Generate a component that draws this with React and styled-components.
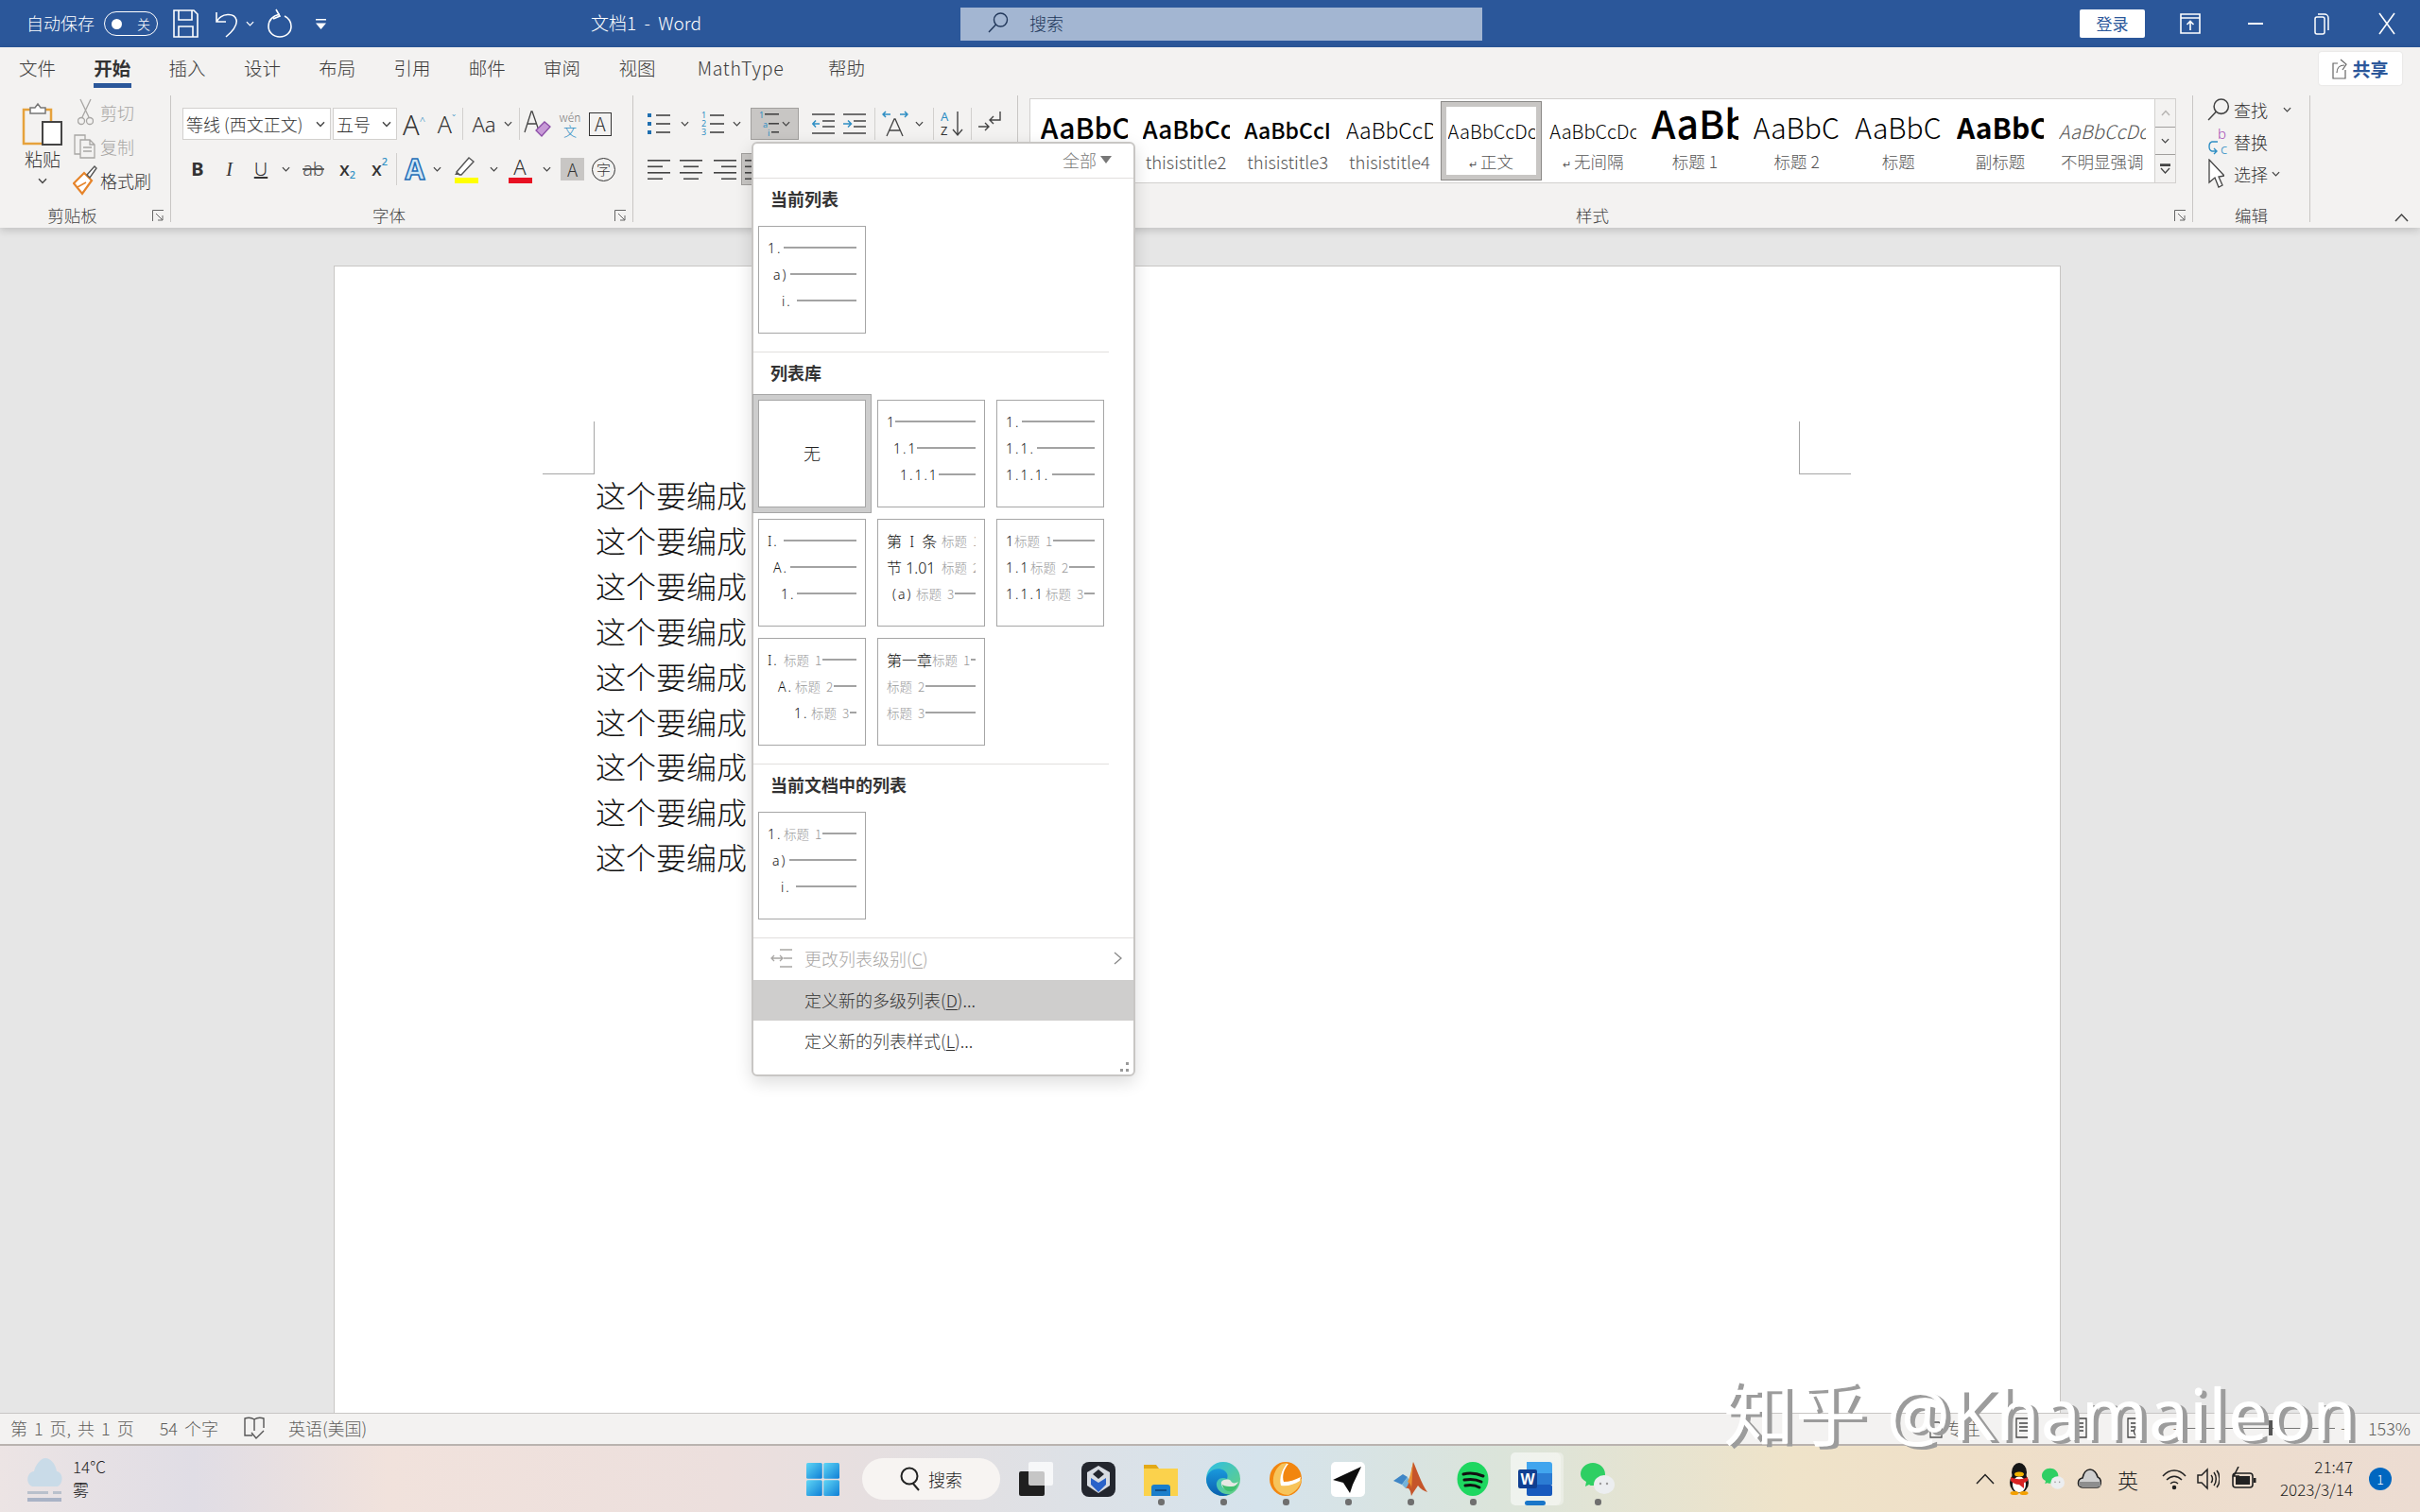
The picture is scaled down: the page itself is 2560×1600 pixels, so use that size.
import React from 'react';
import styled, { createGlobalStyle } from 'styled-components';

const ui = `"Noto Sans CJK SC", "Noto Sans", sans-serif`;

const GlobalStyle = createGlobalStyle`
  html, body { margin: 0; padding: 0; width: 2560px; height: 1600px; overflow: hidden; background: #e6e6e6; }
  body { font-family: ${ui}; color: #333; }
  * { box-sizing: border-box; }
  svg { display: block; flex: none; }
`;

const Screen = styled.div`
  position: relative;
  width: 2560px;
  height: 1600px;
  display: flex;
  flex-direction: column;
  overflow: hidden;
`;

/* ---------- title bar ---------- */
const TitleBar = styled.header`
  height: 50px;
  flex: none;
  display: grid;
  grid-template-columns: 1016px 552px 1fr;
  background: #2b579a;
  color: #fff;
`;
const QuickBar = styled.div`
  display: flex;
  align-items: center;
  padding-left: 28px;
`;
const AutoSave = styled.span`
  font-size: 18px;
  font-weight: 300;
  width: 82px;
  padding-bottom: 2px;
`;
const Toggle = styled.div`
  width: 57px;
  height: 26px;
  border: 1.5px solid #fff;
  border-radius: 13px;
  display: flex;
  align-items: center;
  justify-content: space-between;
  padding: 0 7px;
  font-size: 14px;
  font-weight: 300;
  i { width: 11px; height: 11px; border-radius: 50%; background: #fff; }
`;
const QuickIcon = styled.span`
  display: inline-flex;
  margin-left: ${p => p.$ml}px;
`;
const DocTitle = styled.span`
  margin-left: 280px;
  font-size: 19px;
  font-weight: 300;
  white-space: pre;
  padding-bottom: 3px;
`;
const SearchBox = styled.div`
  align-self: center;
  height: 35px;
  background: #a3b6d2;
  display: flex;
  align-items: center;
  padding: 0 0 2px 29px;
  gap: 22px;
  font-size: 18px;
  font-weight: 300;
  color: #21375a;
`;
const WindowControls = styled.div`
  display: flex;
  align-items: center;
  justify-content: flex-end;
`;
const LoginButton = styled.div`
  width: 69px;
  height: 30px;
  margin-right: 13px;
  background: #fff;
  color: #2b579a;
  border-radius: 2px;
  font-size: 17px;
  text-align: center;
  line-height: 30px;
`;
const WindowButton = styled.div`
  width: 69.5px;
  height: 50px;
  display: flex;
  align-items: center;
  justify-content: center;
`;

/* ---------- ribbon ---------- */
const Ribbon = styled.section`
  flex: none;
  height: 191px;
  background: #f3f2f1;
  box-shadow: 0 3px 8px rgba(0, 0, 0, 0.16);
  position: relative;
  z-index: 2;
`;
const TabRow = styled.nav`
  height: 42px;
  display: flex;
  align-items: flex-start;
  padding-left: 20px;
  gap: 39.3px;
`;
const Tab = styled.div`
  height: 43px;
  width: ${p => p.$w || 40}px;
  margin-left: ${p => p.$ml || 0}px;
  padding-top: 7px;
  border-bottom: 5px solid ${p => (p.$active ? '#2b579a' : 'transparent')};
  font-size: 19.5px;
  line-height: 30px;
  letter-spacing: ${p => (p.$w ? 0.7 : 0)}px;
  font-weight: ${p => (p.$active ? 700 : 300)};
  color: ${p => (p.$active ? '#333' : '#3b3a39')};
  white-space: nowrap;
`;
const ShareButton = styled.div`
  margin: 5px 19px 0 auto;
  width: 88px;
  height: 35px;
  background: #fff;
  border-radius: 3px;
  box-shadow: 0 0 2px rgba(0, 0, 0, 0.12);
  display: flex;
  align-items: center;
  justify-content: center;
  gap: 5px;
  font-size: 19px;
  font-weight: 700;
  color: #2b579a;
`;
const RibbonBody = styled.div`
  height: 149px;
  display: flex;
  padding: 9px 0 6px;
`;
const Group = styled.div`
  width: ${p => p.$w}px;
  height: 134px;
  flex: none;
  border-right: ${p => (p.$last ? 0 : 1)}px solid #c8c6c4;
  display: flex;
  flex-direction: column;
`;
const GroupBody = styled.div`
  height: 117px;
  flex: none;
  padding: ${p => p.$pad || '0'};
`;
const GroupLabel = styled.div`
  display: grid;
  grid-template-columns: ${p => (p.$plain ? '1fr' : '1fr 14px')};
  column-gap: 8px;
  padding-right: ${p => (p.$plain ? 0 : 5)}px;
  align-items: center;
  height: 20px;
  font-size: 17.5px;
  line-height: 20px;
  font-weight: 300;
  color: #444;
  text-align: center;
`;
const CollapseBox = styled.div`
  margin-left: auto;
  margin-right: 12px;
  align-self: flex-end;
`;

/* clipboard */
const ClipboardBody = styled(GroupBody)`
  display: flex;
  padding-left: 22px;
`;
const PasteColumn = styled.div`
  width: 46px;
  padding-top: 7px;
  display: flex;
  flex-direction: column;
  align-items: center;
  font-size: 19px;
  font-weight: 300;
  color: #333;
  span { margin: 0 0 6px; line-height: 28px; }
`;
const ClipColumn = styled.div`
  margin-left: 10px;
  display: flex;
  flex-direction: column;
`;
const ClipRow = styled.div`
  height: 36px;
  display: flex;
  align-items: center;
  padding-bottom: 1px;
  font-size: 18px;
  font-weight: 300;
  color: ${p => (p.$off ? '#a8a6a4' : '#333')};
`;
const ClipIcon = styled.span`
  width: 28px;
  display: flex;
  justify-content: center;
  padding-right: 4px;
`;

/* tool rows */
const ToolRow = styled.div`
  height: 34px;
  display: flex;
  align-items: center;
  margin-bottom: 14px;
`;
const ComboBox = styled.div`
  width: ${p => p.$w}px;
  height: 34px;
  margin-right: ${p => p.$mr || 0}px;
  background: #fff;
  border: 1px solid #d2d0ce;
  display: flex;
  align-items: center;
  justify-content: space-between;
  padding: 0 5px 0 3px;
  font-size: 18px;
  font-weight: 300;
  color: #333;
  white-space: nowrap;
  overflow: hidden;
`;
const Slot = styled.div`
  width: ${p => p.$w}px;
  height: 34px;
  margin-left: ${p => p.$ml || 0}px;
  flex: none;
  display: flex;
  align-items: center;
  justify-content: center;
  position: relative;
  background: ${p => (p.$on ? '#c8c6c4' : 'transparent')};
  border: ${p => (p.$on ? '1px solid #a19f9d' : '0')};
`;
const ToolSep = styled.div`
  width: 1px;
  height: 34px;
  flex: none;
  background: #d2d0ce;
  margin-left: ${p => p.$ml || 0}px;
`;
const Glyph = styled.span`
  font-family: ${p => p.$font || `"Noto Sans", sans-serif`};
  font-size: ${p => p.$size}px;
  font-weight: ${p => p.$weight || 300};
  font-style: ${p => (p.$italic ? 'italic' : 'normal')};
  text-decoration: ${p => p.$deco || 'none'};
  color: ${p => p.$color || '#333'};
  -webkit-text-stroke: ${p => p.$stroke || '0'};
  line-height: 1;
  white-space: nowrap;
`;
const Corner = styled.sup`
  font-size: 11px;
  line-height: 0;
  vertical-align: 11px;
  color: ${p => p.$color || '#333'};
`;
const Sub = styled.sub`
  font-size: 11px;
  line-height: 0;
  vertical-align: -3px;
  color: #2f8fc4;
`;
const BoxedA = styled.div`
  width: 24px;
  height: 25px;
  border: 1.5px solid #333;
  font-size: 20px;
  font-weight: 300;
  line-height: 22px;
  text-align: center;
`;
const GrayA = styled.div`
  width: 25px;
  height: 24px;
  background: #c8c6c4;
  font-size: 19px;
  font-weight: 300;
  line-height: 24px;
  text-align: center;
  color: #333;
`;
const CircleChar = styled.div`
  width: 25px;
  height: 25px;
  border: 1.5px solid #333;
  border-radius: 50%;
  font-size: 15px;
  line-height: 22px;
  text-align: center;
  font-weight: 300;
`;
const WenStack = styled.div`
  display: flex;
  flex-direction: column;
  align-items: center;
  font-size: 12px;
  line-height: 14px;
  color: #777;
  font-weight: 300;
  b { font-weight: 300; font-size: 14px; color: #2f8fc4; }
`;
const ColorBar = styled.div`
  display: flex;
  flex-direction: column;
  align-items: center;
  gap: 1px;
  i { width: 25px; height: 6px; background: ${p => p.$color}; }
`;

/* styles gallery */
const StylesBody = styled(GroupBody)`
  padding: 3px 0 0 12px;
`;
const StyleGallery = styled.div`
  width: 1213px;
  height: 90px;
  background: #fff;
  border: 1px solid #d2d0ce;
  padding-left: 3px;
  display: flex;
`;
const StyleItem = styled.div`
  width: 107.7px;
  height: 84px;
  margin-top: 2px;
  flex: none;
  padding: ${p => (p.$selected ? '3px 0 0' : '4px 0 0')};
  border: ${p => (p.$selected ? '1px solid #8a8886' : '0')};
  outline: ${p => (p.$selected ? '5px solid #c8c6c4' : '0')};
  outline-offset: -6px;
`;
const StylePreview = styled.div`
  width: 92px;
  height: 46px;
  margin: 0 auto;
  overflow: hidden;
  white-space: nowrap;
  font-size: 30px;
  line-height: 46px;
`;
const PreviewText = styled.span`
  font-size: ${p => p.$size}px;
  font-weight: ${p => p.$weight || 300};
  font-style: ${p => (p.$italic ? 'italic' : 'normal')};
  color: ${p => p.$color || '#000'};
  line-height: 0;
`;
const StyleName = styled.div`
  height: 30px;
  font-size: ${p => (p.$latin ? 18.5 : 17.5)}px;
  line-height: 28px;
  font-weight: 300;
  text-align: center;
  color: #555;
  white-space: nowrap;
  small { font-size: 11px; margin-right: 3px; }
`;
const GalleryScroll = styled.div`
  margin-left: auto;
  width: 22px;
  display: flex;
  flex-direction: column;
  background: #f3f2f1;
  border-left: 1px solid #d2d0ce;
`;
const ScrollButton = styled.div`
  flex: 1;
  display: flex;
  align-items: center;
  justify-content: center;
  & + & { border-top: 1px solid #a19f9d; }
`;

/* edit group */
const EditBody = styled(GroupBody)`
  padding-left: 15px;
  display: flex;
  flex-direction: column;
  gap: 4px;
`;
const EditRow = styled.div`
  height: 30px;
  display: flex;
  align-items: center;
  font-size: 18px;
  font-weight: 300;
  color: #333;
  line-height: 26px;
  span { width: 28px; flex: none; }
  em { margin-left: ${p => p.$chevron}px; font-style: normal; }
`;

/* ---------- document ---------- */
const DocArea = styled.main`
  flex: 1;
  min-height: 0;
  background: #e6e6e6;
  padding: 40px 380px 0 353px;
`;
const Page = styled.article`
  height: 100%;
  background: #fff;
  border: 1px solid #c8c6c4;
  border-bottom: 0;
  padding: 164px 221px 0 220px;
`;
const MarkRow = styled.div`
  display: flex;
  justify-content: space-between;
  margin-bottom: -2px;
`;
const CropMark = styled.div`
  width: 55px;
  height: 56px;
  border-bottom: 1px solid #a6a6a6;
  border-${p => (p.$right ? 'left' : 'right')}: 1px solid #a6a6a6;
`;
const Paragraph = styled.p`
  margin: 0 0 0 56px;
  font-size: 32px;
  line-height: 47.9px;
  font-weight: 300;
  color: #111;
`;

/* ---------- list popup ---------- */
const ListPopup = styled.div`
  position: absolute;
  left: 795px;
  top: 150px;
  width: 406px;
  height: 989px;
  z-index: 5;
  background: #fff;
  border: 2px solid #c8c6c4;
  border-radius: 6px;
  box-shadow: 0 6px 18px rgba(0, 0, 0, 0.14);
  display: flex;
  flex-direction: column;
`;
const PopupHead = styled.div`
  height: 37px;
  flex: none;
  border-bottom: 1px solid #e1dfdd;
  display: flex;
  align-items: center;
  justify-content: flex-end;
  gap: 4px;
  padding: 0 23px 3px 0;
  font-size: 18px;
  font-weight: 300;
  color: #777;
`;
const SectionTitle = styled.h3`
  margin: 0 0 6px;
  height: 44px;
  line-height: 42px;
  padding-left: 18px;
  font-size: 18px;
  font-weight: 700;
  color: #333;
`;
const ThumbGrid = styled.div`
  display: grid;
  grid-template-columns: repeat(3, 114px);
  grid-auto-rows: 114px;
  gap: 12px;
  padding-left: 5px;
`;
const Thumb = styled.div`
  width: 114px;
  height: 114px;
  background: #fff;
  border: 1px solid #a6a6a6;
  padding: 8px 9px 0;
  box-shadow: ${p => (p.$selected ? '0 0 0 5px #cdcdcd, 0 0 0 6px #a6a6a6' : 'none')};
`;
const NoneThumb = styled(Thumb)`
  display: flex;
  align-items: center;
  justify-content: center;
  padding: 0 0 2px;
  font-size: 18px;
  font-weight: 300;
  color: #222;
`;
const ThumbRow = styled.div`
  height: 28px;
  display: flex;
  align-items: center;
  overflow: hidden;
  padding-left: ${p => p.$indent || 0}px;
  white-space: nowrap;
  font-size: 14px;
  font-weight: 300;
`;
const ThumbNum = styled.span`
  flex: none;
  width: ${p => p.$w}px;
  font-family: "Noto Sans", ${ui};
  font-size: ${p => (p.$big ? 16 : 14)}px;
  letter-spacing: ${p => (p.$tight ? 0 : 2)}px;
  color: #111;
`;
const ThumbCaption = styled.span`
  flex: none;
  color: #999;
  margin-right: 1px;
  font-size: 13.5px;
  font-weight: 300;
  word-spacing: 3px;
`;
const ThumbLine = styled.i`
  flex: 1;
  min-width: 6px;
  height: 2px;
  background: #a3a3a3;
`;
const SectionRule = styled.div`
  height: 1px;
  flex: none;
  margin: 19px ${p => (p.$full ? 0 : 26)}px 0 0;
  background: #e1dfdd;
`;
const MenuItem = styled.div`
  height: ${p => p.$h}px;
  flex: none;
  display: flex;
  align-items: center;
  padding-bottom: 2px;
  font-size: 18px;
  font-weight: 300;
  color: ${p => (p.$off ? '#a8a6a4' : '#333')};
  background: ${p => (p.$on ? '#cfcecd' : 'transparent')};
  u { text-underline-offset: 2px; }
`;
const MenuIcon = styled.span`
  width: 54px;
  flex: none;
  display: flex;
  justify-content: center;
  padding-left: 8px;
`;
const MenuArrow = styled.span`
  margin-left: auto;
  margin-right: 12px;
`;
const Grip = styled.div`
  flex: 1;
  display: flex;
  align-items: flex-end;
  justify-content: flex-end;
  padding: 0 5px 3px 0;
`;

/* ---------- status bar ---------- */
const StatusBar = styled.footer`
  height: 35px;
  flex: none;
  background: #f3f2f1;
  border-top: 1px solid #c8c6c4;
  border-bottom: 2px solid #b9b3af;
  display: flex;
  align-items: center;
  padding: 0 10px 2px 11px;
  font-size: 18px;
  font-weight: 300;
  color: #605e5c;
`;
const StatusText = styled.span`
  margin-left: ${p => p.$ml || 0}px;
  white-space: pre;
  word-spacing: 3px;
`;
const StatusIcon = styled.span`
  margin-left: ${p => (p.$auto ? 'auto' : `${p.$ml}px`)};
  display: inline-flex;
`;
const ZoomSlider = styled.div`
  width: 160px;
  height: 1px;
  margin-left: 2px;
  background: #777;
  display: flex;
  align-items: center;
  padding-left: 90px;
  i { width: 4px; height: 16px; background: #555; }
`;
const Watermark = styled.div`
  position: absolute;
  left: 1823px;
  top: 1445px;
  z-index: 6;
  font-family: "Noto Sans", "Noto Sans CJK SC", sans-serif;
  font-size: 75px;
  line-height: 100px;
  letter-spacing: 1px;
  color: #fff;
  text-shadow: 5px 3px 0 #9c9c9c;
  white-space: pre;
`;

/* ---------- taskbar ---------- */
const Taskbar = styled.div`
  height: 70px;
  flex: none;
  background: linear-gradient(90deg, #ece4e4 0%, #e0dde5 8%, #f1e2dc 16%, #ecdfdd 30%, #e6dfe0 36%, #d5e3ec 52%, #dbe4da 62%, #efe3c9 74%, #efdfc8 82%, #ecdcd2 100%);
  display: grid;
  grid-template-columns: 853px auto 1fr;
`;
const Weather = styled.div`
  display: flex;
  align-items: center;
  padding: 0 0 2px 28px;
  gap: 11px;
  font-size: 17px;
  font-weight: 300;
  line-height: 24px;
  color: #222;
`;
const TaskCenter = styled.div`
  display: flex;
  align-items: center;
`;
const StartIcon = styled.div`
  width: 59px;
`;
const SearchPill = styled.div`
  width: 146px;
  height: 44px;
  margin-right: 5px;
  border-radius: 22px;
  background: #f7f4f2;
  display: flex;
  align-items: center;
  justify-content: center;
  gap: 8px;
  font-size: 18px;
  font-weight: 300;
  color: #222;
`;
const TaskApp = styled.div`
  position: relative;
  width: 66px;
  height: 70px;
  display: flex;
  align-items: center;
  justify-content: center;
`;
const ActiveWash = styled.div`
  width: 53px;
  height: 56px;
  border-radius: 5px;
  background: rgba(255, 255, 255, 0.55);
  box-shadow: 3px 0 0 rgba(255, 255, 255, 0.35);
  display: flex;
  align-items: center;
  justify-content: center;
`;
const RunDot = styled.i`
  position: absolute;
  bottom: 7px;
  left: 50%;
  width: ${p => (p.$active ? 22 : 7)}px;
  height: ${p => (p.$active ? 5 : 7)}px;
  margin-left: ${p => (p.$active ? -11 : -3.5)}px;
  border-radius: 3px;
  background: ${p => (p.$active ? '#1976c9' : '#6f6f6f')};
`;
const Tray = styled.div`
  display: flex;
  align-items: center;
  justify-content: flex-end;
  padding-right: 30px;
  font-weight: 300;
  color: #222;
`;
const TrayItem = styled.span`
  display: inline-flex;
  margin-left: ${p => p.$ml}px;
  font-size: 22px;
`;
const Clock = styled.div`
  margin-left: 25px;
  padding-bottom: 2px;
  text-align: right;
  font-size: 17px;
  line-height: 24px;
  font-weight: 300;
`;
const Badge = styled.div`
  width: 24px;
  height: 24px;
  margin-left: 17px;
  border-radius: 50%;
  background: #0067c0;
  color: #fff;
  font-size: 14px;
  line-height: 24px;
  text-align: center;
`;

/* ---------- icons ---------- */
const Chev = ({ c = '#444', s = 10 }) => (
  <svg width={s} height={s * 0.7} viewBox="0 0 10 7"><path d="M1 1.2 5 5.4 9 1.2" fill="none" stroke={c} strokeWidth="1.4" /></svg>
);
const Launcher = () => (
  <svg width="13" height="13" viewBox="0 0 13 13" fill="none" stroke="#666" strokeWidth="1"><path d="M.5 12V.5H12M4 4l7 7M11 6v5H6" /></svg>
);
const SaveIcon = () => (
  <svg width="27" height="30" viewBox="0 0 27 30" fill="none" stroke="#fff" strokeWidth="1.6"><path d="M1 1h21l4 4v24H1zM6 1v10h14V1M6 29V18h15v11" /></svg>
);
const UndoIcon = () => (
  <svg width="24" height="30" viewBox="0 0 24 30" fill="none" stroke="#fff" strokeWidth="1.6"><path d="M1 3v10h10M1.5 12.5C6 4 20 3 22 11c1.600 6.500-5 13-11 18" /></svg>
);
const RedoIcon = () => (
  <svg width="26" height="32" viewBox="0 0 26 32" fill="none" stroke="#fff" strokeWidth="1.6"><path d="M9 1l4 7-7 3M13 6C5 8 1 13 1 19c0 6 5 11 12 11s12-5 12-11c0-5-3-9-7-11" /></svg>
);
const CustomizeIcon = () => (
  <svg width="11" height="11" viewBox="0 0 11 11" fill="#fff"><path d="M0 0h11v1.500H0zM0 4.500h11L5.500 11z" /></svg>
);
const SearchGlass = ({ c = '#21375a', s = 22 }) => (
  <svg width={s} height={s} viewBox="0 0 22 22" fill="none" stroke={c} strokeWidth="1.4"><circle cx="13.500" cy="8" r="7" /><path d="M8.500 13 1 21" /></svg>
);
const DisplayIcon = () => (
  <svg width="22" height="22" viewBox="0 0 22 22" fill="none" stroke="#fff" strokeWidth="1.6"><path d="M1 1h20v20H1zM1 5h20M11 18v-9M7.500 12 11 8.500l3.500 3.500" /></svg>
);
const MinIcon = () => (
  <svg width="16" height="3" viewBox="0 0 16 3"><path d="M0 0h16v2H0z" fill="#fff" /></svg>
);
const RestoreIcon = () => (
  <svg width="16" height="24" viewBox="0 0 16 24" fill="none" stroke="#fff" strokeWidth="1.5"><rect x="1" y="5" width="10" height="18" rx="2" /><path d="M4 2h7a4 4 0 0 1 4 4v13" /></svg>
);
const CloseIcon = () => (
  <svg width="18" height="24" viewBox="0 0 18 24" stroke="#fff" strokeWidth="1.6"><path d="M1 1l16 22M17 1 1 23" /></svg>
);
const ShareIcon = () => (
  <svg width="16" height="22" viewBox="0 0 16 22" fill="none" stroke="#666" strokeWidth="1.2"><path d="M6 5H1v16h13V12M5 15c0-5 3-8 8-8M9 1l6 5-4 6" /></svg>
);
const PasteIcon = () => (
  <svg width="44" height="46" viewBox="0 0 44 46" fill="none">
    <path d="M9 8H2v36h20" stroke="#e6a23c" strokeWidth="2.500" />
    <path d="M24 8h7v12" stroke="#e6a23c" strokeWidth="2.500" />
    <path d="M9 12V6h5l3-4 3 4h5v6z" fill="#fff" stroke="#777" strokeWidth="1.500" />
    <rect x="22" y="21" width="20" height="24" fill="#fff" stroke="#444" strokeWidth="2" />
  </svg>
);
const ScissorsIcon = () => (
  <svg width="17" height="30" viewBox="0 0 17 30" fill="none" stroke="#a8a6a4" strokeWidth="1.300"><path d="M3 1l9 19M14 1 5 20" /><circle cx="4" cy="24" r="3.500" /><circle cx="13" cy="24" r="3.500" /></svg>
);
const CopyIcon = () => (
  <svg width="24" height="26" viewBox="0 0 24 26" fill="none" stroke="#a8a6a4" strokeWidth="1.300"><path d="M7 21H1V1h11v5" /><path d="M7 6h10l5 5v14H7zM10 14h9M10 18h9M17 6v5h5" /></svg>
);
const BrushIcon = () => (
  <svg width="26" height="34" viewBox="0 0 26 34"><path d="M1 20 12 9l8 8L10 31z" fill="#fff" stroke="#e6842a" strokeWidth="2.200" /><path d="M5 24l9-5" stroke="#e6842a" strokeWidth="1.500" /><path d="M15 11 23 2l2 2-7 10z" fill="#fff" stroke="#555" strokeWidth="1.400" /></svg>
);
const EraserIcon = () => (
  <svg width="30" height="30" viewBox="0 0 30 30"><path d="M1 24 8 2h1l7 20M4 15h9" fill="none" stroke="#444" strokeWidth="1.300" /><path d="M13 22l9-9 6 5-9 10z" fill="#c79ad7" stroke="#8c4ea8" strokeWidth="1.300" /></svg>
);
const ListLines = ({ rows, markColor = '#2f8fc4', tall = 26 }) => (
  <svg width="24" height={tall} viewBox="0 0 24 26">
    {[4, 13, 22].map((y, i) => (
      <g key={y}>
        {rows === 'dots' && <rect x="0" y={y - 2} width="4" height="4" fill="#1f6fb0" />}
        {rows === 'nums' && <text x="0" y={y + 3} fontSize="9" fill={markColor} fontFamily="Noto Sans">{i + 1}</text>}
        <rect x="9" y={y - 0.800} width="15" height="1.600" fill="#444" />
      </g>
    ))}
  </svg>
);
const MultiIcon = () => (
  <svg width="24" height="28" viewBox="0 0 24 28">
    <text x="0" y="8" fontSize="9" fill="#2f8fc4" fontFamily="Noto Sans">1</text>
    <rect x="6" y="3" width="15" height="1.600" fill="#444" />
    <text x="4" y="18" fontSize="9" fill="#2f8fc4" fontFamily="Noto Sans">a</text>
    <rect x="10" y="13" width="11" height="1.600" fill="#444" />
    <text x="9" y="27" fontSize="9" fill="#2f8fc4" fontFamily="Noto Sans">i</text>
    <rect x="13" y="22" width="8" height="1.600" fill="#444" />
  </svg>
);
const IndentIcon = ({ out }) => (
  <svg width="24" height="24" viewBox="0 0 24 24" fill="none">
    <path d="M0 2h24M11 9h13M11 15h13M0 22h24" stroke="#444" strokeWidth="1.500" />
    <path d={out ? 'M8 12H1M4 8.500 .8 12 4 15.500' : 'M0 12h8M5 8.500 8.500 12 5 15.500'} stroke="#2f8fc4" strokeWidth="1.500" />
  </svg>
);
const AlignIcon = ({ kind }) => {
  const rows = { left: [[0, 24], [0, 16], [0, 24], [0, 16]], center: [[0, 24], [4, 20], [0, 24], [4, 20]], right: [[0, 24], [8, 24], [0, 24], [8, 24]], just: [[0, 24], [0, 24], [0, 24], [0, 24]] }[kind];
  return (
    <svg width="24" height="22" viewBox="0 0 24 22">
      {rows.map(([a, b], i) => <rect key={i} x={a} y={1 + i * 6.500} width={b - a} height="1.600" fill="#444" />)}
    </svg>
  );
};
const SpacingA = () => (
  <svg width="28" height="30" viewBox="0 0 28 30" fill="none">
    <path d="M5 28 13 10h1l8 18M8 22h11" stroke="#444" strokeWidth="1.300" />
    <path d="M1 5h8M4 2 1 5l3 3M27 5h-8M24 2l3 3-3 3" stroke="#2f8fc4" strokeWidth="1.500" />
  </svg>
);
const SortIcon = () => (
  <svg width="26" height="30" viewBox="0 0 26 30">
    <text x="0" y="12" fontSize="13" fill="#2f8fc4" fontFamily="Noto Sans">A</text>
    <text x="0" y="27" fontSize="13" fill="#333" fontFamily="Noto Sans">Z</text>
    <path d="M18 2v25M13 21l5 6 5-6" fill="none" stroke="#444" strokeWidth="1.400" />
  </svg>
);
const PilcrowIcon = () => (
  <svg width="26" height="28" viewBox="0 0 26 28" fill="none" stroke="#444" strokeWidth="1.400"><path d="M1 17h11M8 13l4 4-4 4" /><path d="M24 1v9H13M17 6l-4 4 4 4" /></svg>
);
const HighlightIcon = () => (
  <svg width="25" height="22" viewBox="0 0 25 22"><path d="M5 20 2 17 15 2l5 4L7 20z" fill="#fff" stroke="#555" strokeWidth="1.400" /><path d="M2 17l5 3H0z" fill="#555" /></svg>
);
const ReplaceIcon = () => (
  <svg width="24" height="30" viewBox="0 0 24 30">
    <text x="11" y="12" fontSize="15" fill="#a54fb5" fontFamily="Noto Sans">b</text>
    <text x="14" y="28" fontSize="15" fill="#2f8fc4" fontFamily="Noto Sans">c</text>
    <path d="M11 15H5c-4 1-4 9 0 10h5M7 22l3 3-3 3" fill="none" stroke="#2f8fc4" strokeWidth="1.400" />
  </svg>
);
const CursorIcon = () => (
  <svg width="18" height="32" viewBox="0 0 18 32" fill="#fff" stroke="#444" strokeWidth="1.300"><path d="M2 1v24l6-5 4 10 4-2-4-9 6-1z" /></svg>
);
const ChangeLevelIcon = () => (
  <svg width="26" height="20" viewBox="0 0 26 20" fill="none" stroke="#a8a6a4" strokeWidth="1.300"><path d="M10 1h13M14 10h9M10 19h13M1 10h12M4 7l-3 3 3 3M10 7l3 3-3 3" /></svg>
);
const BookIcon = () => (
  <svg width="26" height="26" viewBox="0 0 26 26" fill="none" stroke="#555" strokeWidth="1.400"><path d="M13 4C10 2 6 2 3 3v18h8M13 4c3-2 7-2 10-1v10M13 4v12M10 18l5 6 8-8" /></svg>
);
const FocusIcon = () => (
  <svg width="18" height="24" viewBox="0 0 18 24" fill="none" stroke="#555" strokeWidth="1.300"><path d="M3 6h9l3 3v13H3z" /></svg>
);
const ViewIcon = ({ web }) => (
  <svg width="20" height="24" viewBox="0 0 20 24" fill="none" stroke="#444" strokeWidth="1.300"><path d="M2 2h16v20H2zM5 7h10M5 11h10M5 15h10" />{web && <circle cx="14" cy="16" r="5.500" fill="#fff" />}</svg>
);
const WindowsLogo = () => (
  <svg width="35" height="35" viewBox="0 0 35 35">
    <defs><linearGradient id="winb" x1="0" y1="0" x2="1" y2="1"><stop offset="0" stopColor="#5fd6f5" /><stop offset="1" stopColor="#0f7fd6" /></linearGradient></defs>
    <rect x="0" y="0" width="16.800" height="16.800" rx="1.500" fill="url(#winb)" />
    <rect x="18.200" y="0" width="16.800" height="16.800" rx="1.500" fill="url(#winb)" />
    <rect x="0" y="18.200" width="16.800" height="16.800" rx="1.500" fill="url(#winb)" />
    <rect x="18.200" y="18.200" width="16.800" height="16.800" rx="1.500" fill="url(#winb)" />
  </svg>
);
const TaskView = () => (
  <svg width="38" height="36" viewBox="0 0 38 36">
    <rect x="1" y="10" width="27" height="26" rx="2" fill="#1f1f1f" />
    <rect x="11" y="0" width="26" height="25" rx="2" fill="#fff" fillOpacity="0.75" />
  </svg>
);
const CubeApp = () => (
  <svg width="36" height="37" viewBox="0 0 36 37">
    <rect width="36" height="37" rx="8" fill="#23262e" />
    <path d="M18 4 30 11v14l-12 8L6 25V11z" fill="#d7dbe2" />
    <path d="M18 8l6 5-6 5-6-5z" fill="#23262e" />
    <path d="M10 17l8 5 8-5v7l-8 8-8-8z" fill="#2a62c9" />
  </svg>
);
const FolderApp = () => (
  <svg width="36" height="35" viewBox="0 0 36 35">
    <path d="M0 2h13l3 4h20v29H0z" fill="#e3a917" />
    <rect y="6" width="36" height="29" fill="#fbd24c" />
    <path d="M8 26a3 3 0 0 1 3-3h14a3 3 0 0 1 3 3v9H8z" fill="#1a7ecb" />
    <rect x="12" y="28" width="12" height="2" fill="#0f4f8a" />
  </svg>
);
const EdgeApp = () => (
  <svg width="36" height="36" viewBox="0 0 36 36">
    <defs>
      <linearGradient id="edgea" x1="0" y1="0" x2="1" y2="1"><stop offset="0" stopColor="#2bbde8" /><stop offset="1" stopColor="#6ad27a" /></linearGradient>
      <linearGradient id="edgeb" x1="0" y1="0" x2="0" y2="1"><stop offset="0" stopColor="#1a9adc" /><stop offset="1" stopColor="#0b5fb0" /></linearGradient>
    </defs>
    <circle cx="18" cy="18" r="18" fill="url(#edgea)" />
    <path d="M0 18C2 8 12 5 19 9c4 3 4 6 3 9-6-3-12 1-11 7 1 6 7 10 14 9-2 1-5 2-7 2C8 36 0 28 0 18z" fill="url(#edgeb)" />
    <path d="M16 21c3-3 8-3 10-1 1 3 5 3 8 1-1 4-4 7-8 9-6 1-11-4-10-9z" fill="#e6e8e4" />
    <path d="M17 24c1 5 5 8 10 7 3-1 6-4 7-10-1 3-4 5-7 5-4 0-7 0-10-2z" fill="#3fbf70" />
  </svg>
);
const OrangeApp = () => (
  <svg width="36" height="36" viewBox="0 0 36 36">
    <ellipse cx="18" cy="18" rx="17" ry="18" fill="#f2860f" />
    <path d="M20 1c-6 6-9 15-6 22 6 1 13-1 21-5-1 8-7 14-14 17-6 0-12-3-15-9C3 18 6 7 14 2z" fill="#f7c45a" />
    <path d="M21 2c-5 6-7 13-5 19 6 0 12-2 18-5l-1 4c-6 4-13 6-20 5-2-8 1-17 6-23z" fill="#fff" />
  </svg>
);
const PlaneApp = () => (
  <svg width="36" height="37" viewBox="0 0 36 37">
    <rect width="36" height="37" rx="5" fill="#fff" />
    <path d="M32 5 2 19l11 3 7 11 3-9zM19 22l10-13-14 12z" fill="#0d0d0d" />
  </svg>
);
const MatlabApp = () => (
  <svg width="36" height="36" viewBox="0 0 36 36">
    <path d="M0 20 10 13l5 3-6 8z" fill="#3f86c6" />
    <path d="M9 24l6-8 4 8-6 4z" fill="#74b3d9" />
    <path d="M21 0c3 6 9 24 15 32-3-1-7-3-10-7-2 3-5 7-7 11-1-6-2-9-6-8 5-5 6-20 8-28z" fill="#c5552a" />
    <path d="M21 0c-2 8-3 16-6 21 3 2 4 4 4 8 1-10 1-20 2-29z" fill="#e89033" />
  </svg>
);
const SpotifyApp = () => (
  <svg width="34" height="36" viewBox="0 0 34 36" fill="none">
    <ellipse cx="17" cy="18" rx="16.500" ry="18" fill="#1ed760" />
    <path d="M7 13c7-2 14-1 21 2M8 19c6-1 12-1 18 2M9 25c5-1 10-1 15 2" stroke="#111" strokeWidth="3" strokeLinecap="round" />
  </svg>
);
const WordApp = () => (
  <svg width="36" height="36" viewBox="0 0 36 36">
    <path d="M9 0h24a3 3 0 0 1 3 3v9H9z" fill="#41a5ee" />
    <rect x="9" y="12" width="27" height="12" fill="#2b7cd3" />
    <rect x="9" y="24" width="27" height="12" rx="2" fill="#185abd" />
    <rect x="0" y="8" width="20" height="20" rx="2" fill="#103f91" />
    <text x="10" y="24" textAnchor="middle" fontSize="16" fontWeight="700" fill="#fff" fontFamily="Liberation Sans">W</text>
  </svg>
);
const WeChatIcon = ({ s = 36 }) => (
  <svg width={s} height={s} viewBox="0 0 36 36">
    <path d="M13 1c7 0 13 5 13 12s-6 12-13 12c-2 0-3 0-4-1l-4 2 1-5C2 19 0 16 0 13 0 6 6 1 13 1z" fill="#2ecf63" />
    <ellipse cx="25" cy="24" rx="11" ry="10" fill="#eceef0" />
    <circle cx="21" cy="23" r="1.200" fill="#999" />
    <circle cx="28" cy="23" r="1.200" fill="#999" />
  </svg>
);
const WeatherIcon = () => (
  <svg width="38" height="54" viewBox="0 0 38 54">
    <path d="M8 36c-9 0-9-15 0-16 1-6 7-14 12-14s11 6 12 14c8 1 7 16-1 16z" fill="#c9dbe8" />
    <rect x="1" y="41" width="22" height="3" fill="#b9c0cc" />
    <rect x="28" y="41" width="9" height="3" fill="#b9c0cc" />
    <rect x="1" y="48" width="36" height="4" fill="#a9b3c6" />
  </svg>
);
const QQIcon = () => (
  <svg width="22" height="34" viewBox="0 0 22 34">
    <ellipse cx="11" cy="10" rx="8" ry="10" fill="#161616" />
    <ellipse cx="11" cy="21" rx="10" ry="11" fill="#161616" />
    <ellipse cx="11" cy="23" rx="7" ry="8.500" fill="#fff" />
    <ellipse cx="11" cy="12" rx="5" ry="2.500" fill="#f4b400" />
    <path d="M2 15c6 3 12 3 18 0v4c-2 1-3 2-4 2v6l-5-4c-4 0-7-2-9-4z" fill="#d92323" />
    <ellipse cx="6" cy="32" rx="4.500" ry="2" fill="#f4a000" />
    <ellipse cx="16" cy="32" rx="4.500" ry="2" fill="#f4a000" />
  </svg>
);
const CloudIcon = () => (
  <svg width="26" height="22" viewBox="0 0 26 22">
    <path d="M6 20c-6 0-6-9 0-10 1-5 4-9 8-9s7 4 8 8c5 2 4 11-1 11z" fill="#cfcfcf" stroke="#222" strokeWidth="1.600" />
    <path d="M2 14h23v5l-4 1H6l-4-2z" fill="#8e8e8e" />
  </svg>
);
const WifiIcon = () => (
  <svg width="26" height="24" viewBox="0 0 26 24" fill="none" stroke="#222" strokeWidth="1.500"><path d="M1 9c7-8 17-8 24 0M5 13c5-5 11-5 16 0M9 17c3-2.500 5-2.500 8 0" /><circle cx="13" cy="21" r="1.500" fill="#222" /></svg>
);
const VolumeIcon = () => (
  <svg width="24" height="24" viewBox="0 0 24 24" fill="none" stroke="#222" strokeWidth="1.500"><path d="M1 8h4l6-6v20l-6-6H1zM15 8c2 2 2 6 0 8M18 5c3 4 3 10 0 14M21 3c4 5 4 13 0 18" /></svg>
);
const BatteryIcon = () => (
  <svg width="26" height="26" viewBox="0 0 26 26"><rect x="1" y="7" width="21" height="15" rx="3" fill="none" stroke="#222" strokeWidth="1.600" /><rect x="23" y="12" width="2.500" height="5" fill="#222" /><rect x="4" y="10" width="15" height="9" fill="#222" /><path d="M7 0 2 10h5l-2 7" fill="none" stroke="#222" strokeWidth="1.600" /></svg>
);
const SearchGlassRound = () => (
  <svg width="22" height="26" viewBox="0 0 22 26" fill="none" stroke="#222" strokeWidth="2"><circle cx="10" cy="10" r="8.500" /><path d="M14 18l6 7" /></svg>
);

/* ---------- data ---------- */
const tabs = [
  { t: '文件' }, { t: '开始', active: true }, { t: '插入' }, { t: '设计' }, { t: '布局' },
  { t: '引用' }, { t: '邮件' }, { t: '审阅' }, { t: '视图' },
  { t: 'MathType', w: 96, ml: 4 }, { t: '帮助', ml: 3 },
];

const styleItems = [
  { text: 'AaBbC', size: 30, weight: 500, name: '' },
  { text: 'AaBbCc', size: 26, weight: 500, name: 'thisistitle2', latin: true },
  { text: 'AaBbCcI', size: 23, weight: 500, name: 'thisistitle3', latin: true },
  { text: 'AaBbCcD', size: 23, name: 'thisistitle4', latin: true },
  { text: 'AaBbCcDc', size: 20, name: '正文', mark: true, selected: true },
  { text: 'AaBbCcDc', size: 20, name: '无间隔', mark: true },
  { text: 'AaBbI', size: 41, weight: 500, name: '标题 1' },
  { text: 'AaBbC', size: 30, name: '标题 2' },
  { text: 'AaBbC', size: 30, name: '标题' },
  { text: 'AaBbC', size: 30, weight: 700, name: '副标题' },
  { text: 'AaBbCcDc', size: 20, italic: true, color: '#555', name: '不明显强调' },
];

const r = (num, w, indent, caption, big, tight) => ({ num, w, indent, caption, big, tight });
const outlineA = [r('1.', 17, 0), r('a)', 18, 6), r('i.', 16, 15)];
const galleryThumbs = [
  { none: true },
  { rows: [r('1', 9, 0), r('1.1', 25, 7), r('1.1.1', 41, 14)] },
  { rows: [r('1.', 17, 0), r('1.1.', 33, 0), r('1.1.1.', 49, 0)] },
  { rows: [r('I.', 17, 0), r('A.', 18, 6), r('1.', 17, 14)] },
  { rows: [r('第 I 条', 58, 0, '标题 1', true), r('节 1.01', 58, 0, '标题 2', true, true), r('(a)', 25, 6, '标题 3')] },
  { rows: [r('1', 9, 0, '标题 1'), r('1.1', 26, 0, '标题 2'), r('1.1.1', 42, 0, '标题 3')] },
  { rows: [r('I.', 17, 0, '标题 1'), r('A.', 18, 11, '标题 2'), r('1.', 18, 28, '标题 3')] },
  { rows: [r('第一章', 48, 0, '标题 1', true, true), r('', 0, 0, '标题 2'), r('', 0, 0, '标题 3')] },
];
const taskApps = [
  { icon: <TaskView /> },
  { icon: <CubeApp /> },
  { icon: <FolderApp />, dot: true },
  { icon: <EdgeApp />, dot: true },
  { icon: <OrangeApp />, dot: true },
  { icon: <PlaneApp />, dot: true },
  { icon: <MatlabApp />, dot: true },
  { icon: <SpotifyApp />, dot: true },
  { icon: <WordApp />, active: true },
  { icon: <WeChatIcon />, dot: true },
];

const OutlineThumb = ({ rows }) => (
  <Thumb>
    {rows.map((row, i) => (
      <ThumbRow key={i} $indent={row.indent}>
        {row.num && <ThumbNum $w={row.w} $big={row.big} $tight={row.tight}>{row.num}</ThumbNum>}
        {row.caption && <ThumbCaption>{row.caption}</ThumbCaption>}
        <ThumbLine />
      </ThumbRow>
    ))}
  </Thumb>
);

export default function App() {
  return (
    <Screen>
      <GlobalStyle />
      <TitleBar>
        <QuickBar>
          <AutoSave>自动保存</AutoSave>
          <Toggle><i />关</Toggle>
          <QuickIcon $ml={16}><SaveIcon /></QuickIcon>
          <QuickIcon $ml={18}><UndoIcon /></QuickIcon>
          <QuickIcon $ml={8}><Chev c="#fff" s={9} /></QuickIcon>
          <QuickIcon $ml={14}><RedoIcon /></QuickIcon>
          <QuickIcon $ml={25}><CustomizeIcon /></QuickIcon>
          <DocTitle>文档1  -  Word</DocTitle>
        </QuickBar>
        <SearchBox><SearchGlass />搜索</SearchBox>
        <WindowControls>
          <LoginButton>登录</LoginButton>
          <WindowButton><DisplayIcon /></WindowButton>
          <WindowButton><MinIcon /></WindowButton>
          <WindowButton><RestoreIcon /></WindowButton>
          <WindowButton><CloseIcon /></WindowButton>
        </WindowControls>
      </TitleBar>

      <Ribbon>
        <TabRow>
          {tabs.map(tab => (
            <Tab key={tab.t} $active={tab.active} $w={tab.w} $ml={tab.ml}>{tab.t}</Tab>
          ))}
          <ShareButton><ShareIcon />共享</ShareButton>
        </TabRow>
        <RibbonBody>
          <Group $w={181}>
            <ClipboardBody>
              <PasteColumn>
                <PasteIcon />
                <span>粘贴</span>
                <Chev />
              </PasteColumn>
              <ClipColumn>
                <ClipRow $off><ClipIcon><ScissorsIcon /></ClipIcon>剪切</ClipRow>
                <ClipRow $off><ClipIcon><CopyIcon /></ClipIcon>复制</ClipRow>
                <ClipRow><ClipIcon><BrushIcon /></ClipIcon>格式刷</ClipRow>
              </ClipColumn>
            </ClipboardBody>
            <GroupLabel><span>剪贴板</span><Launcher /></GroupLabel>
          </Group>

          <Group $w={489}>
            <GroupBody $pad="13px 0 0 12px">
              <ToolRow>
                <ComboBox $w={157} $mr={2}>等线 (西文正文)<Chev /></ComboBox>
                <ComboBox $w={68}>五号<Chev /></ComboBox>
                <Slot $w={36}><Glyph $size={29}>A<Corner $color="#2f8fc4">^</Corner></Glyph></Slot>
                <Slot $w={33}><Glyph $size={25}>A<Corner $color="#2f8fc4">ˇ</Corner></Glyph></Slot>
                <ToolSep />
                <Slot $w={38} $ml={3}><Glyph $size={22}>Aa</Glyph></Slot>
                <Slot $w={12}><Chev s={9} /></Slot>
                <ToolSep $ml={6} />
                <Slot $w={38}><EraserIcon /></Slot>
                <Slot $w={30}><WenStack>wén<b>文</b></WenStack></Slot>
                <Slot $w={34}><BoxedA>A</BoxedA></Slot>
              </ToolRow>
              <ToolRow>
                <Slot $w={32}><Glyph $size={20} $weight={700}>B</Glyph></Slot>
                <Slot $w={35}><Glyph $size={20} $italic $font="Liberation Serif">I</Glyph></Slot>
                <Slot $w={32}><Glyph $size={20} $deco="underline">U</Glyph></Slot>
                <Slot $w={20}><Chev s={9} /></Slot>
                <Slot $w={39}><Glyph $size={20} $deco="line-through" $color="#555">ab</Glyph></Slot>
                <Slot $w={33}><Glyph $size={20} $weight={500}>x<Sub>2</Sub></Glyph></Slot>
                <Slot $w={35}><Glyph $size={20} $weight={500}>x<Corner $color="#2f8fc4">2</Corner></Glyph></Slot>
                <ToolSep />
                <Slot $w={38}><Glyph $size={30} $weight={700} $color="#cfe6f5" $stroke="1.5px #1f6fb8">A</Glyph></Slot>
                <Slot $w={8}><Chev s={9} /></Slot>
                <Slot $w={50} $ml={2}><ColorBar $color="#ffff00"><HighlightIcon /><i /></ColorBar></Slot>
                <Slot $w={8}><Chev s={9} /></Slot>
                <Slot $w={48}><ColorBar $color="#e81123"><Glyph $size={22}>A</Glyph><i /></ColorBar></Slot>
                <Slot $w={8}><Chev s={9} /></Slot>
                <Slot $w={25} $ml={11}><GrayA>A</GrayA></Slot>
                <Slot $w={25} $ml={8}><CircleChar>字</CircleChar></Slot>
              </ToolRow>
            </GroupBody>
            <GroupLabel><span>字体</span><Launcher /></GroupLabel>
          </Group>

          <Group $w={407}>
            <GroupBody $pad="13px 0 0 12px">
              <ToolRow>
                <Slot $w={30}><ListLines rows="dots" /></Slot>
                <Slot $w={24}><Chev s={9} /></Slot>
                <Slot $w={36}><ListLines rows="nums" /></Slot>
                <Slot $w={14}><Chev s={9} /></Slot>
                <Slot $w={51} $ml={8} $on><MultiIcon /><Chev s={9} /></Slot>
                <Slot $w={26} $ml={13}><IndentIcon out /></Slot>
                <Slot $w={26} $ml={7}><IndentIcon /></Slot>
                <ToolSep $ml={8} />
                <Slot $w={42}><SpacingA /></Slot>
                <Slot $w={8}><Chev s={9} /></Slot>
                <ToolSep $ml={11} />
                <Slot $w={39}><SortIcon /></Slot>
                <ToolSep />
                <Slot $w={38}><PilcrowIcon /></Slot>
              </ToolRow>
              <ToolRow>
                <Slot $w={30}><AlignIcon kind="left" /></Slot>
                <Slot $w={30} $ml={4}><AlignIcon kind="center" /></Slot>
                <Slot $w={30} $ml={6}><AlignIcon kind="right" /></Slot>
                <Slot $w={32} $ml={2} $on><AlignIcon kind="just" /></Slot>
              </ToolRow>
            </GroupBody>
            <GroupLabel $plain />
          </Group>

          <Group $w={1243}>
            <StylesBody>
              <StyleGallery>
                {styleItems.map((item, i) => (
                  <StyleItem key={i} $selected={item.selected}>
                    <StylePreview>
                      <PreviewText $size={item.size} $weight={item.weight} $italic={item.italic} $color={item.color}>{item.text}</PreviewText>
                    </StylePreview>
                    <StyleName $latin={item.latin}>{item.mark && <small>↵</small>}{item.name}</StyleName>
                  </StyleItem>
                ))}
                <GalleryScroll>
                  <ScrollButton><svg width="10" height="7" viewBox="0 0 10 7"><path d="M1 6 5 1.600 9 6" fill="none" stroke="#b5b3b1" strokeWidth="1.400" /></svg></ScrollButton>
                  <ScrollButton><Chev s={9} /></ScrollButton>
                  <ScrollButton>
                    <svg width="11" height="12" viewBox="0 0 11 12"><path d="M0 1h11v1.400H0zM1 5l4.500 5L10 5" fill="none" stroke="#444" strokeWidth="1.300" /></svg>
                  </ScrollButton>
                </GalleryScroll>
              </StyleGallery>
            </StylesBody>
            <GroupLabel><span>样式</span><Launcher /></GroupLabel>
          </Group>

          <Group $w={124}>
            <EditBody>
              <EditRow $chevron={16}><span><SearchGlass c="#444" s={24} /></span>查找<em><Chev s={9} /></em></EditRow>
              <EditRow><span><ReplaceIcon /></span>替换</EditRow>
              <EditRow $chevron={4}><span><CursorIcon /></span>选择<em><Chev s={9} /></em></EditRow>
            </EditBody>
            <GroupLabel $plain>编辑</GroupLabel>
          </Group>
          <CollapseBox>
            <svg width="15" height="10" viewBox="0 0 15 10"><path d="M1 9 7.500 2 14 9" fill="none" stroke="#444" strokeWidth="1.500" /></svg>
          </CollapseBox>
        </RibbonBody>
      </Ribbon>

      <DocArea>
        <Page>
          <MarkRow>
            <CropMark />
            <CropMark $right />
          </MarkRow>
          {Array.from({ length: 9 }, (_, i) => <Paragraph key={i}>这个要编成</Paragraph>)}
        </Page>
      </DocArea>

      <StatusBar>
        <StatusText>第 1 页, 共 1 页</StatusText>
        <StatusText $ml={27}>54 个字</StatusText>
        <StatusIcon $ml={25}><BookIcon /></StatusIcon>
        <StatusText $ml={23}>英语(美国)</StatusText>
        <StatusIcon $auto><FocusIcon /></StatusIcon>
        <StatusText $ml={2}>专注</StatusText>
        <StatusIcon $ml={36}><ViewIcon /></StatusIcon>
        <StatusIcon $ml={38}><ViewIcon /></StatusIcon>
        <StatusIcon $ml={40}><ViewIcon web /></StatusIcon>
        <StatusText $ml={30}>−</StatusText>
        <ZoomSlider><i /></ZoomSlider>
        <StatusText $ml={6}>+</StatusText>
        <StatusText $ml={19}>153%</StatusText>
      </StatusBar>

      <Taskbar>
        <Weather>
          <WeatherIcon />
          <div>14°C<br />雾</div>
        </Weather>
        <TaskCenter>
          <StartIcon><WindowsLogo /></StartIcon>
          <SearchPill><SearchGlassRound />搜索</SearchPill>
          {taskApps.map((app, i) => (
            <TaskApp key={i}>
              {app.active ? <ActiveWash>{app.icon}</ActiveWash> : app.icon}
              {(app.dot || app.active) && <RunDot $active={app.active} />}
            </TaskApp>
          ))}
        </TaskCenter>
        <Tray>
          <TrayItem $ml={0}><svg width="20" height="12" viewBox="0 0 20 12"><path d="M1 11 10 1.500 19 11" fill="none" stroke="#222" strokeWidth="1.500" /></svg></TrayItem>
          <TrayItem $ml={15}><QQIcon /></TrayItem>
          <TrayItem $ml={13}><WeChatIcon s={24} /></TrayItem>
          <TrayItem $ml={13}><CloudIcon /></TrayItem>
          <TrayItem $ml={17}>英</TrayItem>
          <TrayItem $ml={25}><WifiIcon /></TrayItem>
          <TrayItem $ml={11}><VolumeIcon /></TrayItem>
          <TrayItem $ml={13}><BatteryIcon /></TrayItem>
          <Clock>21:47<br />2023/3/14</Clock>
          <Badge>1</Badge>
        </Tray>
      </Taskbar>

      <ListPopup>
        <PopupHead>
          全部
          <svg width="12" height="8" viewBox="0 0 12 8"><path d="M0 0h12L6 8z" fill="#777" /></svg>
        </PopupHead>
        <SectionTitle>当前列表</SectionTitle>
        <ThumbGrid><OutlineThumb rows={outlineA} /></ThumbGrid>
        <SectionRule />
        <SectionTitle>列表库</SectionTitle>
        <ThumbGrid>
          {galleryThumbs.map((thumb, i) => (
            thumb.none
              ? <NoneThumb key={i} $selected>无</NoneThumb>
              : <OutlineThumb key={i} rows={thumb.rows} />
          ))}
        </ThumbGrid>
        <SectionRule />
        <SectionTitle>当前文档中的列表</SectionTitle>
        <ThumbGrid>
          <OutlineThumb rows={[r('1.', 17, 0, '标题 1'), r('a)', 18, 5), r('i.', 16, 14)]} />
        </ThumbGrid>
        <SectionRule $full />
        <MenuItem $h={44} $off>
          <MenuIcon><ChangeLevelIcon /></MenuIcon>
          更改列表级别(<u>C</u>)
          <MenuArrow><svg width="9" height="14" viewBox="0 0 9 14"><path d="M1 1l7 6-7 6" fill="none" stroke="#888" strokeWidth="1.300" /></svg></MenuArrow>
        </MenuItem>
        <MenuItem $h={43} $on><MenuIcon />定义新的多级列表(<u>D</u>)...</MenuItem>
        <MenuItem $h={43}><MenuIcon />定义新的列表样式(<u>L</u>)...</MenuItem>
        <Grip>
          <svg width="10" height="10" viewBox="0 0 10 10" fill="#999"><rect x="7" y="0" width="3" height="3" /><rect x="1" y="7" width="3" height="3" /><rect x="7" y="7" width="3" height="3" /></svg>
        </Grip>
      </ListPopup>

      <Watermark>知乎 @Khamaileon</Watermark>
    </Screen>
  );
}
